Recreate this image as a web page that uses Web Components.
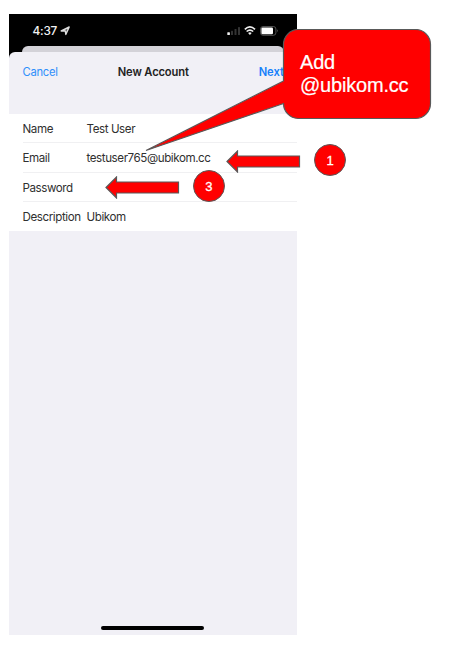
<!DOCTYPE html>
<html lang="en">
<head>
<meta charset="utf-8">
<title>New Account</title>
<style>
body{margin:0;background:#fff;width:464px;height:648px;overflow:hidden;position:relative;font-family:Inter,"Liberation Sans",sans-serif}
</style>
</head>
<body>
<guide-page></guide-page>
<script>
const define = (name, html) => customElements.define(name, class extends HTMLElement {
  constructor() {
    super();
    this.attachShadow({mode: 'open'}).innerHTML = html;
  }
});

define('status-bar', `
<style>
:host{display:flex;height:32px;padding:1px 18px 0 23.5px;align-items:center;box-sizing:border-box;color:#f2f2f2;font-size:11.8px;font-weight:500;letter-spacing:-.2px}
.loc{margin-left:2.5px}
.right{margin-left:auto;display:block}
</style>
<span>4:37</span>
<svg class="loc" width="10" height="10" viewBox="0 0 10 10"><path d="M9.2 1 5.8 8.4 5.3 5 1.2 5Z" fill="#555" stroke="#ddd" stroke-width="1.4" stroke-linejoin="round"/></svg>
<svg class="right" width="52" height="12" viewBox="0 0 52 12">
<rect x="0.3" y="7.2" width="2.6" height="2.8" rx=".6" fill="#eee"/>
<rect x="4" y="5.8" width="2" height="4.2" rx=".5" fill="#333"/>
<rect x="7.5" y="4" width="2" height="6" rx=".5" fill="#333"/>
<rect x="11" y="2" width="2" height="8" rx=".5" fill="#333"/>
<g transform="translate(-.8 0)">
<path d="M18.6 4.3Q23.7 -.4 28.8 4.3M20.4 6.5Q23.7 3.6 27 6.5" fill="none" stroke="#eee" stroke-width="1.6"/>
<path d="M21.9 8.1Q23.7 6.6 25.5 8.1L23.7 10Z" fill="#eee"/>
</g>
<rect x="33.5" y="1.5" width="15.4" height="8.8" rx="2.5" fill="none" stroke="#666" stroke-width=".8"/>
<rect x="34.4" y="2.5" width="11.6" height="6.8" rx="1.3" fill="#fff"/>
<path d="M50.1 4.3Q51.7 5.8 50.1 7.3Z" fill="#666"/>
</svg>`);

define('nav-bar', `
<style>
:host{display:grid;grid-template-columns:1fr auto 1fr;height:62px;box-sizing:border-box;padding:12.5px 12.5px 0 13.5px;font-size:11.2px;line-height:14px}
.a{color:#2f8ffb;letter-spacing:-.25px}.t{font-weight:600;color:#222;font-size:11.2px;letter-spacing:-.15px}.n{color:#1680fb;font-weight:600;text-align:right}
</style>
<span class="a">Cancel</span><span class="t">New Account</span><span class="n">Next</span>`);

define('form-row', `
<style>
:host{display:flex;height:29.33px;box-sizing:border-box;padding-top:7.5px;margin-left:13.5px;border-bottom:1px solid #f0f0f2;font-size:11.6px;line-height:14px;letter-spacing:-.42px;color:#303030;white-space:nowrap}
:host(.low){padding-top:8.2px}
:host(:last-child){border-bottom:0}
.l{width:64px;flex:none}
</style>
<span class="l"><slot name="label"></slot></span><span><slot></slot></span>`);

define('phone-screen', `
<style>
:host{display:flex;flex-direction:column;width:287.5px;height:621px;background:#000}
.back{height:16px;margin:0 13px -10px;background:#d3d2d8;border-radius:6px 6px 0 0}
.sheet{flex:1;display:flex;flex-direction:column;background:#f1f0f6;border-radius:6px 6px 0 0;position:relative}
.form{background:#fff;height:117px}
.home{width:103px;height:3.5px;border-radius:2px;background:#000;margin:auto auto 5.2px 92px}
</style>
<status-bar></status-bar>
<div class="back"></div>
<div class="sheet">
<nav-bar></nav-bar>
<div class="form">
<form-row><span slot="label">Name</span>Test User</form-row>
<form-row><span slot="label">Email</span>testuser765@ubikom.cc</form-row>
<form-row class="low"><span slot="label">Password</span></form-row>
<form-row class="low"><span slot="label">Description</span>Ubikom</form-row>
</div>
<div class="home"></div>
</div>`);

define('arrow-mark', `
<style>:host{display:block;width:75px;height:23px}svg{display:block}</style>
<svg width="75" height="23"><path d="M1 11.5 11.5 1V6H73.5V17H11.5V22Z" fill="red" stroke="#595959" stroke-width="1.2"/></svg>`);

define('step-badge', `
<style>:host{display:flex;width:32.5px;height:32.5px;box-sizing:border-box;border:1px solid #595959;border-radius:50%;background:red;color:#fff;align-items:center;justify-content:center;font:13px "Liberation Sans",Arial,sans-serif;-webkit-text-stroke:.3px #fff}</style>
<slot></slot>`);

define('speech-callout', `
<style>
:host{display:block;width:286px;height:123px}
svg{position:absolute;left:0;top:0}
p{position:absolute;left:155px;top:22px;margin:0;color:#fff;font:20px/23px "Liberation Sans",Arial,sans-serif;letter-spacing:-.2px;-webkit-text-stroke:.2px #fff;white-space:nowrap}
</style>
<svg width="288" height="123"><path d="M153 0.5H270.5A15 15 0 0 1 285.5 15.5V74.5A15 15 0 0 1 270.5 89.5H153A15 15 0 0 1 138.5 74.5L1 121.5 138.5 52V15.5A15 15 0 0 1 153 .5Z" fill="red" stroke="#595959" stroke-width="1.2"/></svg>
<p><slot></slot></p>`);

define('guide-page', `
<style>
:host{display:block;padding:14px 0 0 9px}
.mark{position:absolute}
</style>
<phone-screen></phone-screen>
<arrow-mark class="mark" style="left:226px;top:150px"></arrow-mark>
<arrow-mark class="mark" style="left:105px;top:176px"></arrow-mark>
<step-badge class="mark" style="left:313.8px;top:143.8px">1</step-badge>
<step-badge class="mark" style="left:192.5px;top:169.8px">3</step-badge>
<speech-callout class="mark" style="left:145px;top:28.5px">Add<br>@ubikom.cc</speech-callout>`);
</script>
</body>
</html>
